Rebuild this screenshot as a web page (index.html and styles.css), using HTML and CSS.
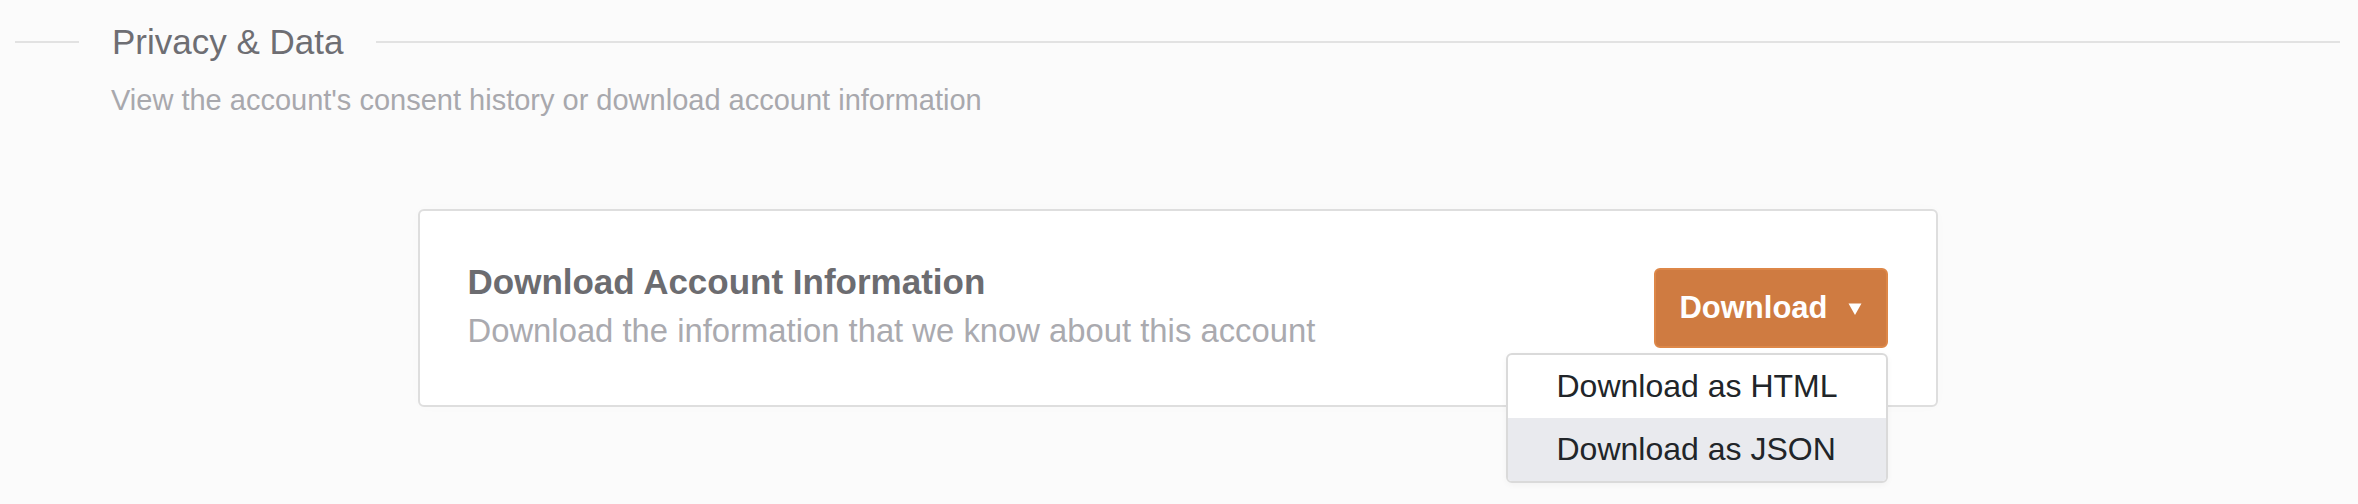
FILE: index.html
```html
<!DOCTYPE html>
<html lang="en">
<head>
<meta charset="utf-8">
<title>Privacy &amp; Data</title>
<link rel="stylesheet" href="styles.css">
</head>
<body>
<section class="section">
  <header class="section-head">
    <span class="rule rule-short"></span>
    <h2 class="section-title">Privacy &amp; Data</h2>
    <span class="rule rule-long"></span>
  </header>
  <p class="section-sub">View the account's consent history or download account information</p>

  <div class="card">
    <div class="card-text">
      <h3 class="card-title">Download Account Information</h3>
      <p class="card-desc">Download the information that we know about this account</p>
    </div>
    <div class="dropdown">
      <button class="btn" type="button">
        <span>Download</span>
        <svg class="caret" width="14" height="12" viewBox="0 0 14 12" aria-hidden="true"><polygon points="0.5,0.5 13.5,0.5 7,12" fill="#fff"/></svg>
      </button>
      <ul class="menu">
        <li class="menu-item">Download as HTML</li>
        <li class="menu-item active">Download as JSON</li>
      </ul>
    </div>
  </div>
</section>
</body>
</html>
```

FILE: styles.css
```css
html, body {
  margin: 0;
  padding: 0;
  background: #fbfbfb;
  font-family: "Liberation Sans", Arial, Helvetica, sans-serif;
}

body {
  min-height: 504px;
}

.section {
  padding: 16px 18px 97px 15px;
}

.section-head {
  display: flex;
  align-items: center;
  gap: 33px;
}

.rule {
  height: 2px;
  background: #e2e2e2;
}

.rule-short {
  width: 64px;
  flex: none;
}

.rule-long {
  flex: 1;
}

.section-title {
  margin: 0;
  font-size: 35px;
  line-height: 52px;
  font-weight: 400;
  color: #6e6e73;
}

.section-sub {
  margin: 12px 0 0 96px;
  font-size: 29px;
  line-height: 40px;
  color: #a8a8ad;
}

.card {
  width: 1520px;
  box-sizing: border-box;
  margin: 89px auto 0;
  padding: 48px 48px;
  background: #fff;
  border: 2px solid #dedede;
  border-radius: 6px;
  box-shadow: 0 0 14px rgba(0, 0, 0, 0.015);
  display: flex;
  align-items: center;
  justify-content: space-between;
}

.card-title {
  margin: 0;
  font-size: 35px;
  line-height: 46px;
  font-weight: 700;
  color: #6c6c70;
}

.card-desc {
  margin: 0;
  font-size: 32.8px;
  line-height: 52px;
  color: #aaaaaf;
}

.dropdown {
  position: relative;
}

.btn {
  display: flex;
  align-items: center;
  gap: 20px;
  height: 80px;
  box-sizing: border-box;
  padding: 0 24px 0 23px;
  background: #cf7b41;
  border: 2px solid #dd8748;
  border-radius: 6px;
  color: #fff;
  font-family: inherit;
  font-size: 31px;
  font-weight: 700;
}

.caret {
  display: block;
  margin-top: 2px;
}

.menu {
  position: absolute;
  top: 85px;
  right: 0;
  z-index: 5;
  width: 382px;
  box-sizing: border-box;
  margin: 0;
  padding: 0;
  list-style: none;
  background: #fff;
  border: 2px solid #dadada;
  border-radius: 6px;
  overflow: hidden;
  box-shadow: 0 2px 6px rgba(0, 0, 0, 0.04);
}

.menu-item {
  height: 63px;
  line-height: 63px;
  padding-left: 49px;
  font-size: 32px;
  color: #212529;
}

.menu-item.active {
  background: #e9eaee;
}
```
